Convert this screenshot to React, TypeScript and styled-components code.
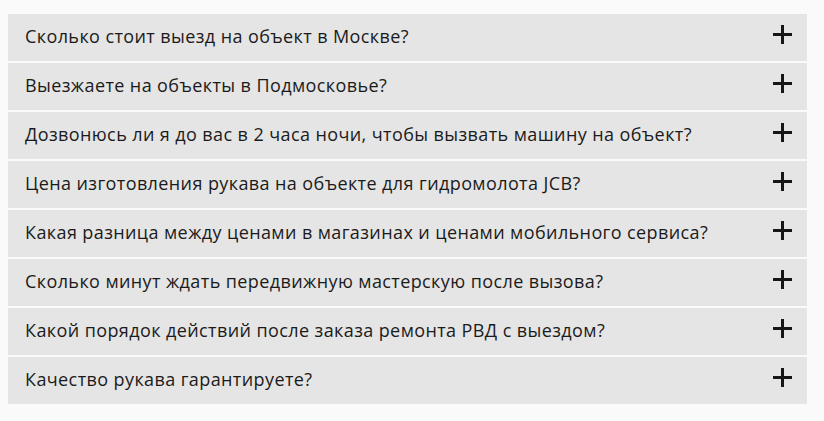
import React from 'react'
import styled, { createGlobalStyle } from 'styled-components'

const GlobalStyle = createGlobalStyle`
  html, body {
    margin: 0;
    padding: 0;
    background: #fafafa;
  }
  body {
    font-family: 'Open Sans', 'Liberation Sans', sans-serif;
  }
`

const FaqList = styled.div`
  display: flex;
  flex-direction: column;
  gap: 2px;
  width: 799px;
  padding: 14px 0 0 8px;
`

const FaqItem = styled.div`
  display: flex;
  align-items: center;
  justify-content: space-between;
  height: 47px;
  padding: 0 15px 0 17px;
  box-sizing: border-box;
  background: #e5e5e5;
  cursor: pointer;
`

const FaqQuestion = styled.div`
  color: #1b1b1b;
  font-size: 18px;
  letter-spacing: 0.4px;
  line-height: 1;
  margin-top: -4px;
`

const PlusIcon = styled.svg`
  width: 19px;
  height: 19px;
  flex-shrink: 0;
  margin-top: -7px;
`

const questions = [
  'Сколько стоит выезд на объект в Москве?',
  'Выезжаете на объекты в Подмосковье?',
  'Дозвонюсь ли я до вас в 2 часа ночи, чтобы вызвать машину на объект?',
  'Цена изготовления рукава на объекте для гидромолота JCB?',
  'Какая разница между ценами в магазинах и ценами мобильного сервиса?',
  'Сколько минут ждать передвижную мастерскую после вызова?',
  'Какой порядок действий после заказа ремонта РВД с выездом?',
  'Качество рукава гарантируете?',
]

const App = () => {
  return (
    <>
      <GlobalStyle />
      <FaqList>
        {questions.map((q) => (
          <FaqItem key={q}>
            <FaqQuestion>{q}</FaqQuestion>
            <PlusIcon viewBox="0 0 19 19">
              <rect x="0" y="8" width="19" height="3" fill="#161616" />
              <rect x="8" y="0" width="3" height="19" fill="#161616" />
            </PlusIcon>
          </FaqItem>
        ))}
      </FaqList>
    </>
  )
}

export default App
